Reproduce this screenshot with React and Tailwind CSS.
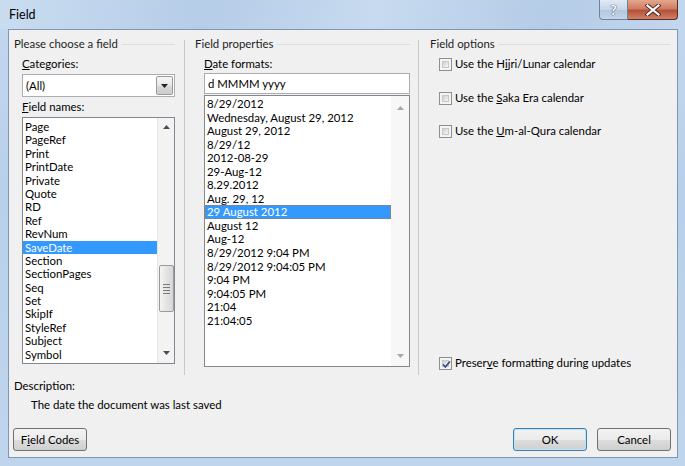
import React from "react";

const fieldNames = ["Page","PageRef","Print","PrintDate","Private","Quote","RD","Ref","RevNum","SaveDate","Section","SectionPages","Seq","Set","SkipIf","StyleRef","Subject","Symbol"];
const formats = ["8/29/2012","Wednesday, August 29, 2012","August 29, 2012","8/29/12","2012-08-29","29-Aug-12","8.29.2012","Aug. 29, 12","29 August 2012","August 12","Aug-12","8/29/2012 9:04 PM","8/29/2012 9:04:05 PM","9:04 PM","9:04:05 PM","21:04","21:04:05"];

function GroupHeader({ children }) {
  return (
    <div className="h-[14px] flex items-center">
      <span className="leading-[14px] whitespace-nowrap text-[#1e1e1e]">{children}</span>
      <div className="flex-1 h-px bg-[#d5dfe5] ml-[4px]" />
    </div>
  );
}

function Up({ color = "#4d4d4d" }) {
  return (
    <svg width="7" height="4" viewBox="0 0 7 4"><path d="M3.5 0 L7 4 L0 4 Z" fill={color} /></svg>
  );
}
function Down({ color = "#4d4d4d" }) {
  return (
    <svg width="7" height="4" viewBox="0 0 7 4"><path d="M0 0 L7 0 L3.5 4 Z" fill={color} /></svg>
  );
}

function CheckBox({ checked }) {
  return (
    <div className="w-[13px] h-[13px] border border-[#8e8f8f] bg-[#f4f4f4] p-[2px] flex-none">
      <div className="w-full h-full bg-[linear-gradient(135deg,#cbcfd5,#f6f6f6)] border border-[#c5c8cc] relative">
        {checked && (
          <svg className="absolute -left-[2px] -top-[2px]" width="11" height="11" viewBox="0 0 11 11">
            <path d="M2 5.5 L4.3 8 L9 2.5" fill="none" stroke="#3c4e86" strokeWidth="1.8" />
          </svg>
        )}
      </div>
    </div>
  );
}

function Btn({ children, focused, className = "" }) {
  return (
    <div className={`h-[23px] w-[74px] rounded-[3px] border flex items-center justify-center ${focused ? "border-[#3c7fb1] shadow-[inset_0_0_0_1px_#bfe2f8]" : "border-[#707070]"} bg-[linear-gradient(to_bottom,#f2f2f2_0%,#ebebeb_50%,#dddddd_51%,#cfcfcf_100%)] ${className}`}>
      <span className="leading-[14px] text-black">{children}</span>
    </div>
  );
}

export default function App() {
  return (
    <div className="w-[685px] h-[466px] overflow-hidden relative bg-[linear-gradient(to_bottom,#c4d8ef,#b9d0ea_40%,#bfd5ed)] font-[Lato,sans-serif] text-[11.4px] text-black">
      {/* title bar */}
      <div className="h-[29px] flex items-start bg-[linear-gradient(100deg,#c9dcf0_0%,#b6cde8_30%,#c7daef_55%,#b5cce7_80%,#c3d7ee_100%)]">
        <span className="ml-[9px] mt-[7px] leading-[16px] text-[12.5px] text-black">Field</span>
        <div className="ml-auto mr-[7px] flex">
          <div className="w-[29px] h-[20px] rounded-bl-[4px] border border-t-0 border-[#6f829b] bg-[linear-gradient(to_bottom,#e1eaf5,#c8d6e8_50%,#b3c6de_51%,#c4d5ea)] flex items-center justify-center">
            <span className="text-[14px] font-bold leading-[14px] text-white [text-shadow:0_0_1px_#2d3d55,0_0_1px_#2d3d55]">?</span>
          </div>
          <div className="w-[50px] h-[20px] rounded-br-[4px] border border-l-0 border-t-0 border-[#5b2d22] bg-[linear-gradient(to_bottom,#e3a88f,#cf7d62_45%,#b5503a_55%,#cf8266)] flex items-center justify-center">
            <svg width="16" height="12" viewBox="0 0 16 12">
              <path d="M2.5 1.5 L13.5 10.5 M13.5 1.5 L2.5 10.5" stroke="#4a2218" strokeWidth="4" strokeLinecap="square" />
              <path d="M2.5 1.5 L13.5 10.5 M13.5 1.5 L2.5 10.5" stroke="#ffffff" strokeWidth="2.2" strokeLinecap="square" />
            </svg>
          </div>
        </div>
      </div>

      {/* client area */}
      <div className="ml-[8px] mr-[7px] h-[429px] bg-[#f0f0f0] border border-[#8097b3] flex flex-col">
        <div className="mt-[7px] h-[338px] flex">
          {/* left column */}
          <div className="w-[175px] pl-[5px] pr-[9px] flex flex-col">
            <GroupHeader>Please choose a field</GroupHeader>
            <div className="pl-[8px] flex flex-col">
              <div className="mt-[6px] leading-[14px]"><span className="underline">C</span>ategories:</div>
              <div className="mt-[3px] h-[23px] bg-white border border-[#abadb3] flex items-center">
                <span className="ml-[3px] leading-[14px]">(All)</span>
                <div className="ml-auto mr-px h-[19px] w-[17px] border border-[#9a9a9a] rounded-[2px] bg-[linear-gradient(to_bottom,#f6f6f6,#e8e8e8_50%,#d8d8d8_51%,#cdcdcd)] flex items-center justify-center">
                  <Down color="#222" />
                </div>
              </div>
              <div className="mt-[3px] leading-[14px]"><span className="underline">F</span>ield names:</div>
              <div className="mt-[3px] h-[247px] bg-white border border-[#828790] flex">
                <div className="flex-1 pt-[2px] flex flex-col">
                  {fieldNames.map((n) => (
                    <div key={n} className={`h-[13.4px] leading-[13.4px] pl-[2px] whitespace-nowrap ${n === "SaveDate" ? "bg-[#3399ff] text-white" : ""}`}>{n}</div>
                  ))}
                </div>
                <div className="w-[17px] bg-[#f3f3f3] border-l border-[#e6e6e6] flex flex-col items-center">
                  <div className="mt-[7px]"><Up /></div>
                  <div className="mt-[136px] w-[15px] h-[47px] rounded-[2px] border border-[#9a9a9a] bg-[linear-gradient(to_right,#f4f4f4,#e4e4e4_50%,#d6d6d6)] flex flex-col items-center justify-center gap-[2px]">
                    <div className="w-[7px] h-px bg-[#7a7a7a]" />
                    <div className="w-[7px] h-px bg-[#7a7a7a]" />
                    <div className="w-[7px] h-px bg-[#7a7a7a]" />
                    <div className="w-[7px] h-px bg-[#7a7a7a]" />
                  </div>
                  <div className="mt-auto mb-[8px]"><Down /></div>
                </div>
              </div>
            </div>
          </div>
          <div className="w-px bg-[#c9c9c9] mt-[3px]" />

          {/* middle column */}
          <div className="w-[233px] pl-[10px] pr-[8px] flex flex-col">
            <GroupHeader>Field properties</GroupHeader>
            <div className="pl-[9px] flex flex-col">
              <div className="mt-[6px] leading-[14px]"><span className="underline">D</span>ate formats:</div>
              <div className="mt-[2px] h-[21px] bg-white border border-[#abadb3] flex items-center">
                <span className="ml-[3px] leading-[14px]">d MMMM yyyy</span>
              </div>
              <div className="mt-px h-[272px] bg-white border border-[#828790] flex">
                <div className="flex-1 pt-[1px] flex flex-col">
                  {formats.map((f) => (
                    <div key={f} className={`h-[13.55px] leading-[11.5px] pl-px whitespace-nowrap border ${f === "29 August 2012" ? "bg-[#3399ff] text-white border-dotted border-[#b5763a]" : "border-transparent"}`}>{f}</div>
                  ))}
                </div>
                <div className="w-[18px] bg-[#f7f7f7] flex flex-col items-center">
                  <div className="mt-[10px]"><Up color="#a8a8a8" /></div>
                  <div className="mt-auto mb-[8px]"><Down color="#a8a8a8" /></div>
                </div>
              </div>
            </div>
          </div>
          <div className="w-px bg-[#c9c9c9] mt-[3px]" />

          {/* right column */}
          <div className="flex-1 pl-[11px] pr-[7px] flex flex-col">
            <GroupHeader>Field options</GroupHeader>
            <div className="pl-[9px] flex flex-col">
              <div className="mt-[6px] h-[14px] flex items-center gap-[3px]">
                <CheckBox />
                <span className="leading-[14px]">Use the H<span className="underline">i</span>jri/Lunar calendar</span>
              </div>
              <div className="mt-[20px] h-[14px] flex items-center gap-[3px]">
                <CheckBox />
                <span className="leading-[14px]">Use the <span className="underline">S</span>aka Era calendar</span>
              </div>
              <div className="mt-[19px] h-[14px] flex items-center gap-[3px]">
                <CheckBox />
                <span className="leading-[14px]">Use the <span className="underline">U</span>m-al-Qura calendar</span>
              </div>
            </div>
            <div className="mt-auto mb-[5px] pl-[9px] h-[14px] flex items-center gap-[3px]">
              <CheckBox checked />
              <span className="leading-[14px]">Preser<span className="underline">v</span>e formatting during updates</span>
            </div>
          </div>
        </div>

        {/* description */}
        <div className="mt-[4px] pl-[5px] leading-[14px]">Description:</div>
        <div className="mt-[5px] pl-[22px] leading-[14px]">The date the document was last saved</div>

        {/* buttons */}
        <div className="mt-[16px] pl-[4px] pr-[6px] flex">
          <Btn>F<span className="underline">i</span>eld Codes</Btn>
          <Btn focused className="ml-auto">OK</Btn>
          <Btn className="ml-[10px]">Cancel</Btn>
        </div>
      </div>
    </div>
  );
}
